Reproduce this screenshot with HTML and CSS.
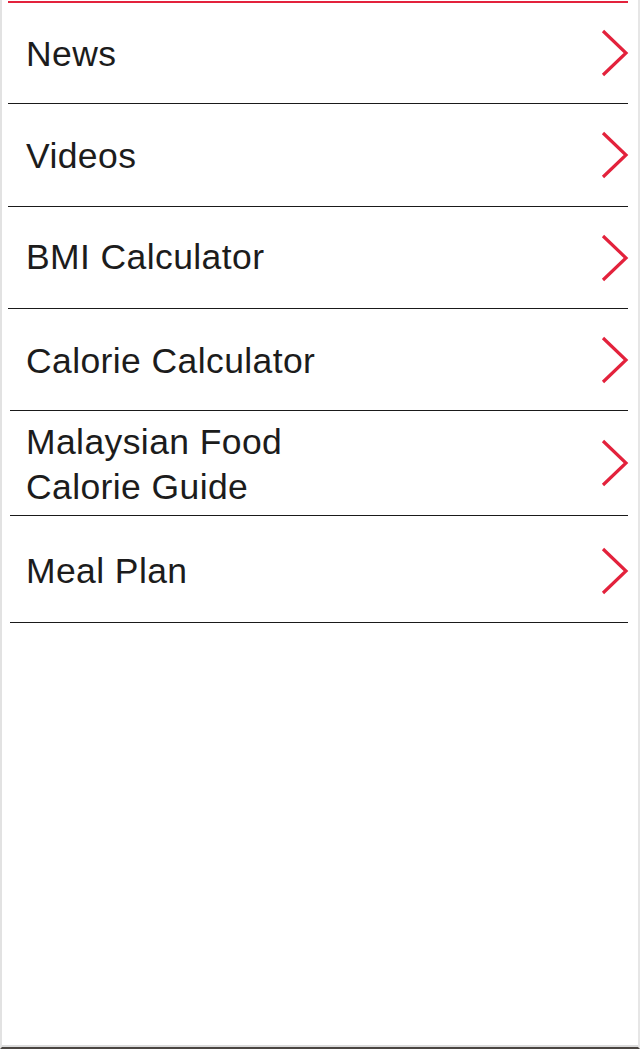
FILE: index.html
```html
<!DOCTYPE html>
<html lang="en">
<head>
<meta charset="utf-8">
<title>Menu</title>
<link rel="stylesheet" href="styles.css">
</head>
<body>
<div class="screen">
  <ul class="menu">
    <li class="item h1"><span class="label">News</span><svg class="chev" viewBox="0 0 28 48" width="28" height="48"><polyline points="2,2 25,24 2,46"/></svg></li>
    <li class="item h2"><span class="label">Videos</span><svg class="chev" viewBox="0 0 28 48" width="28" height="48"><polyline points="2,2 25,24 2,46"/></svg></li>
    <li class="item h3"><span class="label up">BMI Calculator</span><svg class="chev" viewBox="0 0 28 48" width="28" height="48"><polyline points="2,2 25,24 2,46"/></svg></li>
    <li class="item h4 inset"><span class="label">Calorie Calculator</span><svg class="chev" viewBox="0 0 28 48" width="28" height="48"><polyline points="2,2 25,24 2,46"/></svg></li>
    <li class="item h5 inset"><span class="label">Malaysian Food<br>Calorie Guide</span><svg class="chev" viewBox="0 0 28 48" width="28" height="48"><polyline points="2,2 25,24 2,46"/></svg></li>
    <li class="item h6 inset"><span class="label down">Meal Plan</span><svg class="chev down" viewBox="0 0 28 48" width="28" height="48"><polyline points="2,2 25,24 2,46"/></svg></li>
  </ul>
</div>
</body>
</html>
```

FILE: styles.css
```css
html, body {
  margin: 0;
  padding: 0;
  background: #ffffff;
}

.screen {
  box-sizing: border-box;
  width: 640px;
  height: 1049px;
  border-left: 2px solid #e2e2e2;
  border-right: 2px solid #e6e6e6;
  border-bottom: 2px solid #4a4642;
  box-shadow: inset 0 -2px 0 #dcdcdc;
  padding-top: 1px;
}

.menu {
  list-style: none;
  margin: 0 10px 0 6px;
  padding: 0;
  border-top: 2px solid #e3223c;
}

.item {
  display: flex;
  align-items: center;
  justify-content: space-between;
  box-sizing: border-box;
  border-bottom: 1px solid #1a1a1a;
  padding: 0 0 0 18px;
  font-family: "Liberation Sans", Arial, sans-serif;
  font-size: 35.5px;
  letter-spacing: 0.4px;
  line-height: 45px;
  color: #1c1c1c;
}

.item.inset {
  margin-left: 2px;
  padding-left: 16px;
}

.h1 { height: 101px; }
.h2 { height: 103px; }
.h3 { height: 102px; }
.h4 { height: 102px; }
.h5 { height: 105px; }
.h6 { height: 107px; }

.label {
  display: block;
  margin-top: 3px;
}

.label.up {
  margin-top: 0;
}

.label.down {
  margin-top: 5px;
}

.chev {
  display: block;
  flex: none;
  margin-right: -1px;
}

.chev.down {
  margin-top: 4px;
}

.chev polyline {
  fill: none;
  stroke: #e3223c;
  stroke-width: 3.2;
  stroke-linecap: butt;
  stroke-linejoin: miter;
}
```
